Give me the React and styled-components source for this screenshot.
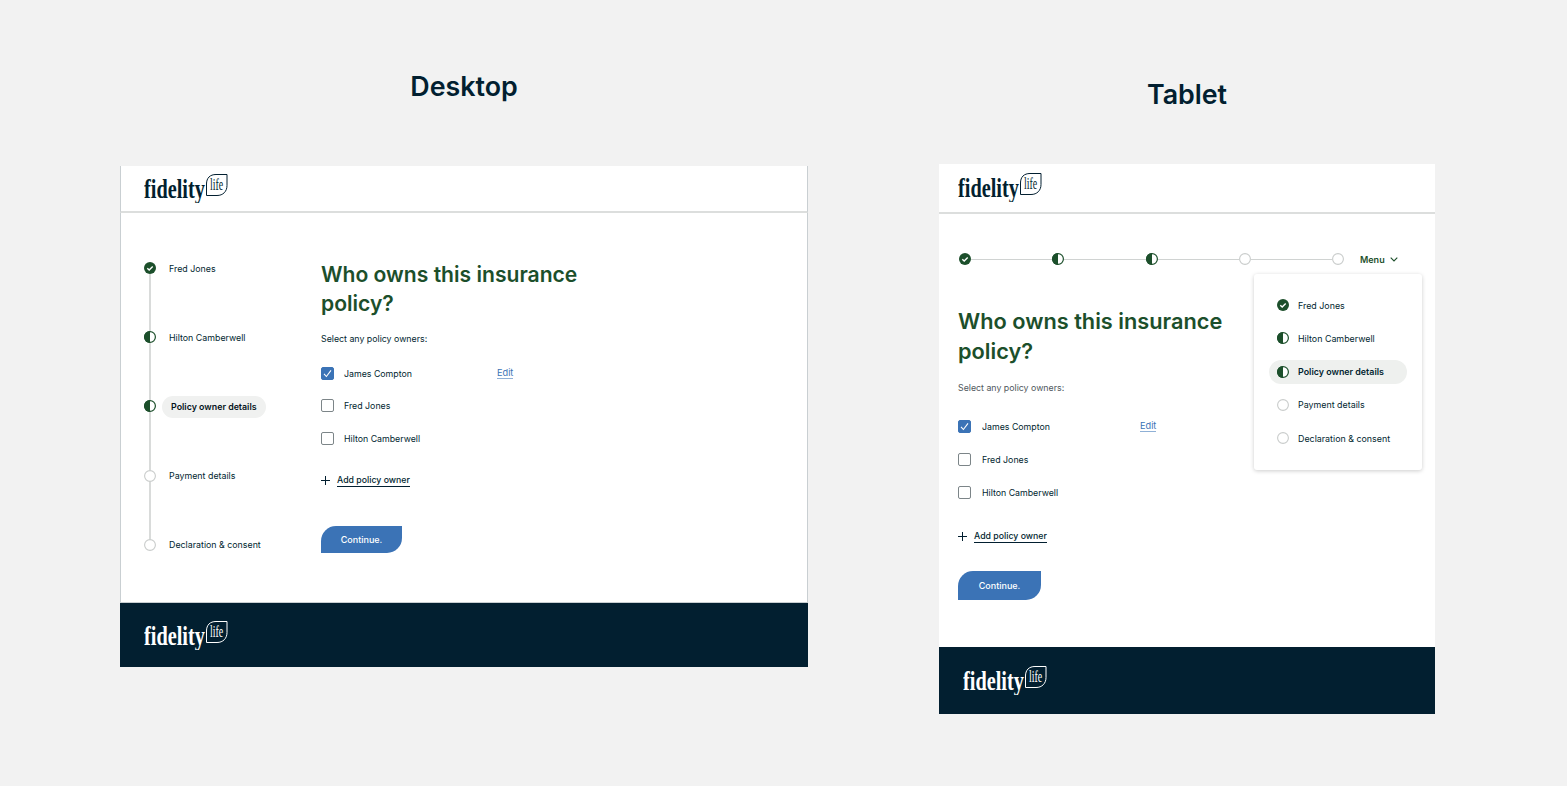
import React from "react";
import styled, { createGlobalStyle } from "styled-components";

const GREEN = "#1c4f2b";
const NAVY = "#021f30";
const BLUE = "#3b73b6";
const EDGE = "#c9cfd2";
const SANS = `"Inter", "Liberation Sans", sans-serif`;

const steps = [
  { label: "Fred Jones", status: "done" },
  { label: "Hilton Camberwell", status: "half" },
  { label: "Policy owner details", status: "half", active: true },
  { label: "Payment details", status: "empty" },
  { label: "Declaration & consent", status: "empty" },
];

function StepIcon({ status }) {
  if (status === "done") {
    return (
      <IconSvg viewBox="0 0 12 12">
        <circle cx="6" cy="6" r="6" fill={GREEN} />
        <path d="M3.3 6.2l1.9 1.8 3.5-3.6" fill="none" stroke="#fff" strokeWidth="1.4" />
      </IconSvg>
    );
  }
  if (status === "half") {
    return (
      <IconSvg viewBox="0 0 12 12">
        <circle cx="6" cy="6" r="5.4" fill="#fff" stroke={GREEN} strokeWidth="1.2" />
        <path d="M6 0a6 6 0 0 0 0 12z" fill={GREEN} />
      </IconSvg>
    );
  }
  return (
    <IconSvg viewBox="0 0 12 12">
      <circle cx="6" cy="6" r="5.4" fill="#fff" stroke="#c9cccb" strokeWidth="1.1" />
    </IconSvg>
  );
}

function Logo({ light }) {
  const color = light ? "#ffffff" : NAVY;
  return (
    <LogoSvg viewBox="0 0 84 30">
      <g transform="translate(0 24.5) scale(0.753 1)">
        <text fontFamily="'Liberation Serif', serif" fontWeight="700" fontSize="27" fill={color}>
          fidelity
        </text>
      </g>
      <path
        d="M83 1.5H72C66 1.500 62.500 5 62.500 11v11.500H73c6 0 10-4 10-10z"
        fill="none"
        stroke={color}
        strokeWidth="1"
      />
      <g transform="translate(66 16.500) scale(0.62 1)">
        <text fontFamily="'Liberation Serif', serif" fontSize="16" fill={color}>
          life
        </text>
      </g>
    </LogoSvg>
  );
}

function PolicyForm({ tablet }) {
  return (
    <Form $tablet={tablet}>
      <Title $tablet={tablet}>Who owns this insurance policy?</Title>
      <Prompt $tablet={tablet}>Select any policy owners:</Prompt>
      <Options>
        <Option $tablet={tablet}>
          <Checkbox $checked>
            <svg viewBox="0 0 13 13" width="13" height="13">
              <path d="M3 6.800l2.400 2.700L10 3.400" fill="none" stroke="#fff" strokeWidth="1.100" />
            </svg>
          </Checkbox>
          <OptionLabel $tablet={tablet}>James Compton</OptionLabel>
          <EditLink>Edit</EditLink>
        </Option>
        <Option $tablet={tablet}>
          <Checkbox />
          <OptionLabel $tablet={tablet}>Fred Jones</OptionLabel>
        </Option>
        <Option $tablet={tablet}>
          <Checkbox />
          <OptionLabel $tablet={tablet}>Hilton Camberwell</OptionLabel>
        </Option>
      </Options>
      <AddOwner $tablet={tablet}>
        <svg viewBox="0 0 9 9" width="9" height="9">
          <path d="M4.500 0v9M0 4.500h9" fill="none" stroke={NAVY} strokeWidth="1" />
        </svg>
        <AddLabel>Add policy owner</AddLabel>
      </AddOwner>
      <ContinueButton $tablet={tablet}>Continue.</ContinueButton>
    </Form>
  );
}

export default function App() {
  return (
    <Page>
      <GlobalStyle />
      <DesktopColumn>
        <Heading>Desktop</Heading>
        <Frame>
          <Header>
            <Logo />
          </Header>
          <DesktopMain>
            <SideSteps>
              {steps.map((step, i) => (
                <SideStep key={step.label}>
                  <Rail>
                    <StepIcon status={step.status} />
                    {i < steps.length - 1 && <RailLine />}
                  </Rail>
                  <SideLabel $active={step.active}>{step.label}</SideLabel>
                </SideStep>
              ))}
            </SideSteps>
            <PolicyForm />
          </DesktopMain>
          <Footer>
            <Logo light />
          </Footer>
        </Frame>
      </DesktopColumn>

      <TabletColumn>
        <Heading $tablet>Tablet</Heading>
        <Frame $tablet>
          <Header $tablet>
            <Logo />
          </Header>
          <TabletMain>
            <TopBar>
              <TopSteps>
                {steps.map((step, i) => (
                  <React.Fragment key={step.label}>
                    <StepIcon status={step.status} />
                    {i < steps.length - 1 && <TopLine />}
                  </React.Fragment>
                ))}
              </TopSteps>
              <MenuButton>
                Menu
                <svg viewBox="0 0 8 5" width="8" height="5">
                  <path d="M.7.7l3.300 3.300L7.300.7" fill="none" stroke={GREEN} strokeWidth="1.100" />
                </svg>
              </MenuButton>
            </TopBar>
            <PolicyForm tablet />
            <Dropdown>
              {steps.map((step) => (
                <DropdownItem key={step.label} $active={step.active}>
                  <StepIcon status={step.status} />
                  {step.label}
                </DropdownItem>
              ))}
            </Dropdown>
          </TabletMain>
          <Footer $tablet>
            <Logo light />
          </Footer>
        </Frame>
      </TabletColumn>
    </Page>
  );
}

const GlobalStyle = createGlobalStyle`
  html, body {
    margin: 0;
    background: #f2f2f2;
  }
  body {
    font-family: ${SANS};
    color: ${NAVY};
  }
`;

const Page = styled.div`
  display: flex;
  width: 1567px;
  height: 786px;
  overflow: hidden;
  padding-left: 120px;
  box-sizing: border-box;
`;

const DesktopColumn = styled.section`
  width: 688px;
  margin-right: 131px;
  padding-top: 69px;
`;

const TabletColumn = styled.section`
  width: 496px;
  padding-top: 77px;
`;

const Heading = styled.h2`
  margin: 0 0 ${(p) => (p.$tablet ? "53px" : "63px")};
  height: 34px;
  font-family: ${SANS};
  font-size: 26.8px;
  line-height: 34px;
  font-weight: 600;
  text-align: center;
  color: ${NAVY};
`;

const Frame = styled.div`
  display: flex;
  flex-direction: column;
  height: ${(p) => (p.$tablet ? "550px" : "501px")};
  background: #fff;
`;

const Header = styled.header`
  flex: none;
  height: ${(p) => (p.$tablet ? "50px" : "47px")};
  padding: ${(p) => (p.$tablet ? "8px 0 0 19px" : "7px 0 0 23px")};
  box-sizing: border-box;
  border-bottom: 2px solid #dcdedd;
  border-left: ${(p) => (p.$tablet ? "none" : `1px solid ${EDGE}`)};
  border-right: ${(p) => (p.$tablet ? "none" : `1px solid ${EDGE}`)};
`;

const LogoSvg = styled.svg`
  display: block;
  width: 84px;
  height: 30px;
`;

const Footer = styled.footer`
  flex: none;
  height: ${(p) => (p.$tablet ? "67px" : "64px")};
  padding: ${(p) => (p.$tablet ? "18px 0 0 24px" : "17px 0 0 24px")};
  box-sizing: border-box;
  background: ${NAVY};
`;

const DesktopMain = styled.main`
  flex: 1;
  display: flex;
  padding: 49px 0 0 23px;
  min-height: 0;
  border-left: 1px solid ${EDGE};
  border-right: 1px solid ${EDGE};
  border-bottom: 1px solid ${EDGE};
`;

const SideSteps = styled.ol`
  list-style: none;
  margin: 0;
  padding: 0;
  width: 177px;
`;

const SideStep = styled.li`
  display: flex;
  gap: 6px;
  height: 69.2px;
`;

const Rail = styled.div`
  display: flex;
  flex-direction: column;
  align-items: center;
  width: 12px;
  height: 100%;
`;

const RailLine = styled.div`
  flex: 1;
  width: 2px;
  background: #d9dbda;
`;

const IconSvg = styled.svg`
  display: block;
  flex: none;
  width: 12px;
  height: 12px;
`;

const SideLabel = styled.span`
  height: 22px;
  margin-top: -4.5px;
  padding: 0 ${(p) => (p.$active ? "9px" : "7px")};
  border-radius: 12px;
  background: ${(p) => (p.$active ? "#f0f1f0" : "transparent")};
  font-size: 8.85px;
  line-height: 22px;
  font-weight: ${(p) => (p.$active ? 600 : 400)};
  white-space: nowrap;
  color: ${(p) => (p.$active ? "#06131b" : NAVY)};
`;

const Form = styled.div`
  width: ${(p) => (p.$tablet ? "290px" : "270px")};
  padding-left: ${(p) => (p.$tablet ? "19px" : "0")};
  margin-top: ${(p) => (p.$tablet ? "41px" : "-2px")};
`;

const Title = styled.h1`
  margin: 0;
  font-family: ${SANS};
  font-size: ${(p) => (p.$tablet ? "21.75px" : "21.1px")};
  line-height: ${(p) => (p.$tablet ? "30px" : "29px")};
  font-weight: 600;
  color: ${GREEN};
`;

const Prompt = styled.p`
  margin: ${(p) => (p.$tablet ? "15px 0 14.500px" : "14px 0 11px")};
  height: 14px;
  font-size: 8.8px;
  line-height: 14px;
  color: ${(p) => (p.$tablet ? "#50585d" : NAVY)};
`;

const Options = styled.div`
  display: flex;
  flex-direction: column;
`;

const Option = styled.div`
  display: flex;
  align-items: center;
  height: ${(p) => (p.$tablet ? "33px" : "32.500px")};
`;

const Checkbox = styled.span`
  flex: none;
  width: 13px;
  height: 13px;
  box-sizing: border-box;
  border-radius: 2px;
  border: 1px solid ${(p) => (p.$checked ? BLUE : "#7c8588")};
  background: ${(p) => (p.$checked ? BLUE : "#fff")};
  & > svg {
    display: block;
    margin: -1px;
  }
`;

const OptionLabel = styled.span`
  margin-left: ${(p) => (p.$tablet ? "11px" : "10px")};
  width: ${(p) => (p.$tablet ? "158px" : "153px")};
  font-size: 8.8px;
`;

const EditLink = styled.a`
  font-size: 9.2px;
  color: ${BLUE};
  border-bottom: 1px solid #8fb0d6;
`;

const AddOwner = styled.div`
  display: flex;
  align-items: center;
  gap: 7px;
  height: 16px;
  margin: ${(p) => (p.$tablet ? "19.500px 0 27px" : "18px 0 37px")};
`;

const AddLabel = styled.span`
  font-size: 8.75px;
  font-weight: 500;
  line-height: 12px;
  border-bottom: 1px solid ${NAVY};
`;

const ContinueButton = styled.button`
  display: block;
  width: ${(p) => (p.$tablet ? "83px" : "81px")};
  height: ${(p) => (p.$tablet ? "29px" : "27px")};
  padding: 0;
  border: none;
  border-radius: 15px 0 15px 0;
  background: ${BLUE};
  color: #fff;
  font-family: ${SANS};
  font-size: 9px;
  font-weight: 500;
`;

const TabletMain = styled.main`
  position: relative;
  flex: 1;
  min-height: 0;
  padding-top: 39px;
`;

const TopBar = styled.div`
  display: flex;
  align-items: center;
  height: 12px;
  padding-left: 20px;
`;

const TopSteps = styled.div`
  display: flex;
  align-items: center;
  width: 385px;
`;

const TopLine = styled.div`
  flex: 1;
  height: 1px;
  background: #d0d3d2;
`;

const MenuButton = styled.div`
  display: flex;
  align-items: center;
  gap: 5px;
  margin-left: 16px;
  font-size: 9px;
  font-weight: 600;
  color: ${GREEN};
`;

const Dropdown = styled.div`
  position: absolute;
  left: 315px;
  top: 60px;
  display: flex;
  flex-direction: column;
  width: 168px;
  height: 196px;
  padding: 19px 15px;
  box-sizing: border-box;
  background: #fff;
  border-radius: 3px;
  box-shadow: 0 1px 4px rgba(0, 0, 0, 0.2);
`;

const DropdownItem = styled.div`
  display: flex;
  align-items: center;
  gap: 9px;
  height: 24px;
  flex: none;
  margin-bottom: 9.250px;
  padding-left: 8px;
  border-radius: 12px;
  background: ${(p) => (p.$active ? "#eef0ee" : "transparent")};
  font-size: 8.9px;
  font-weight: ${(p) => (p.$active ? 600 : 400)};
  white-space: nowrap;
`;
